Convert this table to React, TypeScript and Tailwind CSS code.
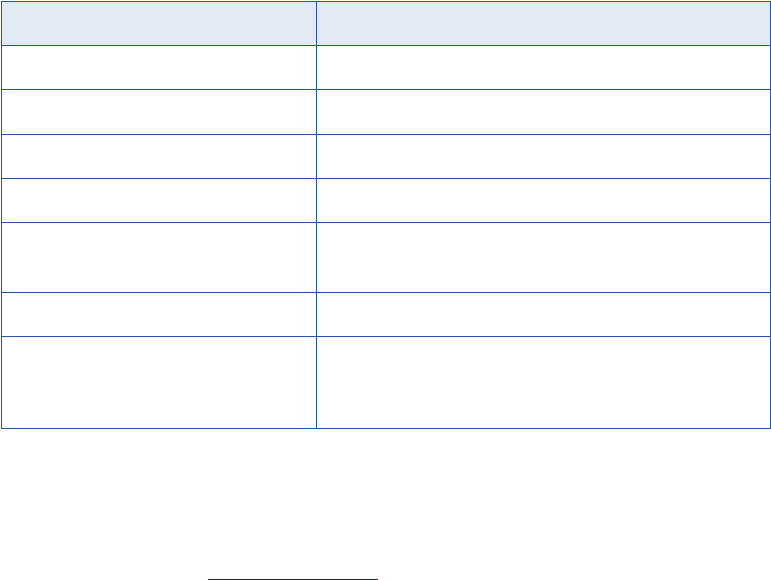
const rows = [
  { h: "h-[44px]", header: true },
  { h: "h-[44px]" },
  { h: "h-[45px]" },
  { h: "h-[44px]" },
  { h: "h-[44px]" },
  { h: "h-[70px]" },
  { h: "h-[44px]" },
  { h: "h-[91px]", last: true },
];

export default function App() {
  return (
    <div className="min-h-[580px] w-[771px] bg-white" style={{ fontFamily: '"Liberation Sans", Arial, sans-serif' }}>
      <div className="ml-px pt-px">
        <div className="w-[770px] border border-[#2a52a6]">
          {rows.map((r, i) => (
            <div
              key={i}
              className={`grid grid-cols-[315px_1fr] ${r.h} ${r.last ? "" : "border-b border-[#2a52a6]"} ${r.header ? "bg-[#e4eaf5]" : "bg-white"}`}
            >
              <div className="border-r border-[#2a52a6]" />
              <div />
            </div>
          ))}
        </div>
        <div className="ml-[207px] mt-[150px] h-px w-[170px] bg-[#1c1c9e]" />
      </div>
    </div>
  );
}
